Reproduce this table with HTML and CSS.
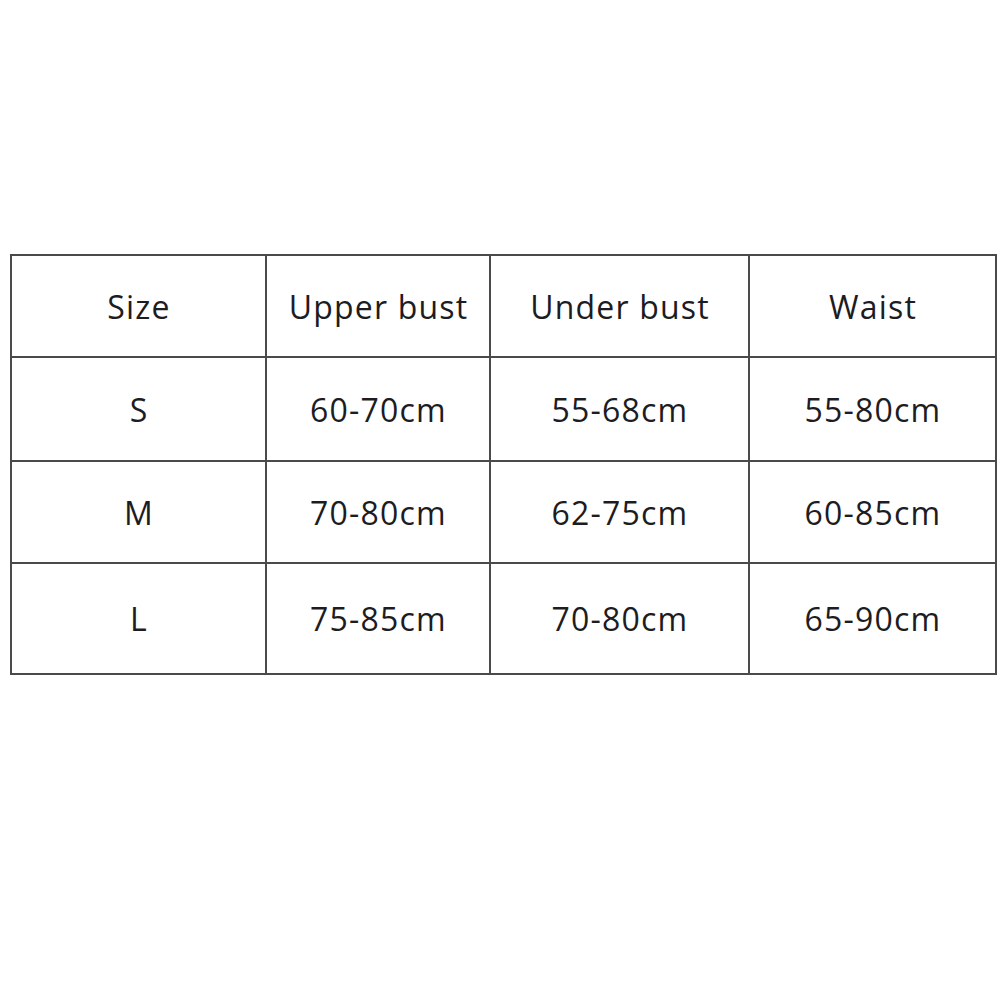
FILE: index.html
```html
<!DOCTYPE html>
<html>
<head>
<meta charset="utf-8">
<link rel="stylesheet" href="styles.css">
</head>
<body>
<table class="size-table">
  <colgroup>
    <col class="c1"><col class="c2"><col class="c3"><col class="c4">
  </colgroup>
  <tr class="r-head"><td>Size</td><td>Upper bust</td><td>Under bust</td><td>Waist</td></tr>
  <tr class="r-mid"><td>S</td><td>60-70cm</td><td>55-68cm</td><td>55-80cm</td></tr>
  <tr class="r-mid2"><td>M</td><td>70-80cm</td><td>62-75cm</td><td>60-85cm</td></tr>
  <tr class="r-last"><td>L</td><td>75-85cm</td><td>70-80cm</td><td>65-90cm</td></tr>
</table>
</body>
</html>
```
FILE: styles.css
```css
html, body {
  margin: 0;
  padding: 0;
  background: #fff;
}
body {
  font-family: "Open Sans", "Noto Sans", sans-serif;
  color: #1c1c22;
}
.size-table {
  border-collapse: collapse;
  margin: 254px 0 0 10px;
  table-layout: fixed;
  width: 985px;
}
.c1 { width: 255px; }
.c2 { width: 224px; }
.c3 { width: 259px; }
.c4 { width: 247px; }
.size-table td {
  border: 2px solid #4a4a4a;
  text-align: center;
  vertical-align: middle;
  font-size: 32px;
  letter-spacing: 1.2px;
  padding: 0 0 0 1px;
}
.r-head td { height: 100px; }
.r-mid td { height: 102px; }
.r-mid2 td { height: 100px; }
.r-last td { height: 109px; }
```
